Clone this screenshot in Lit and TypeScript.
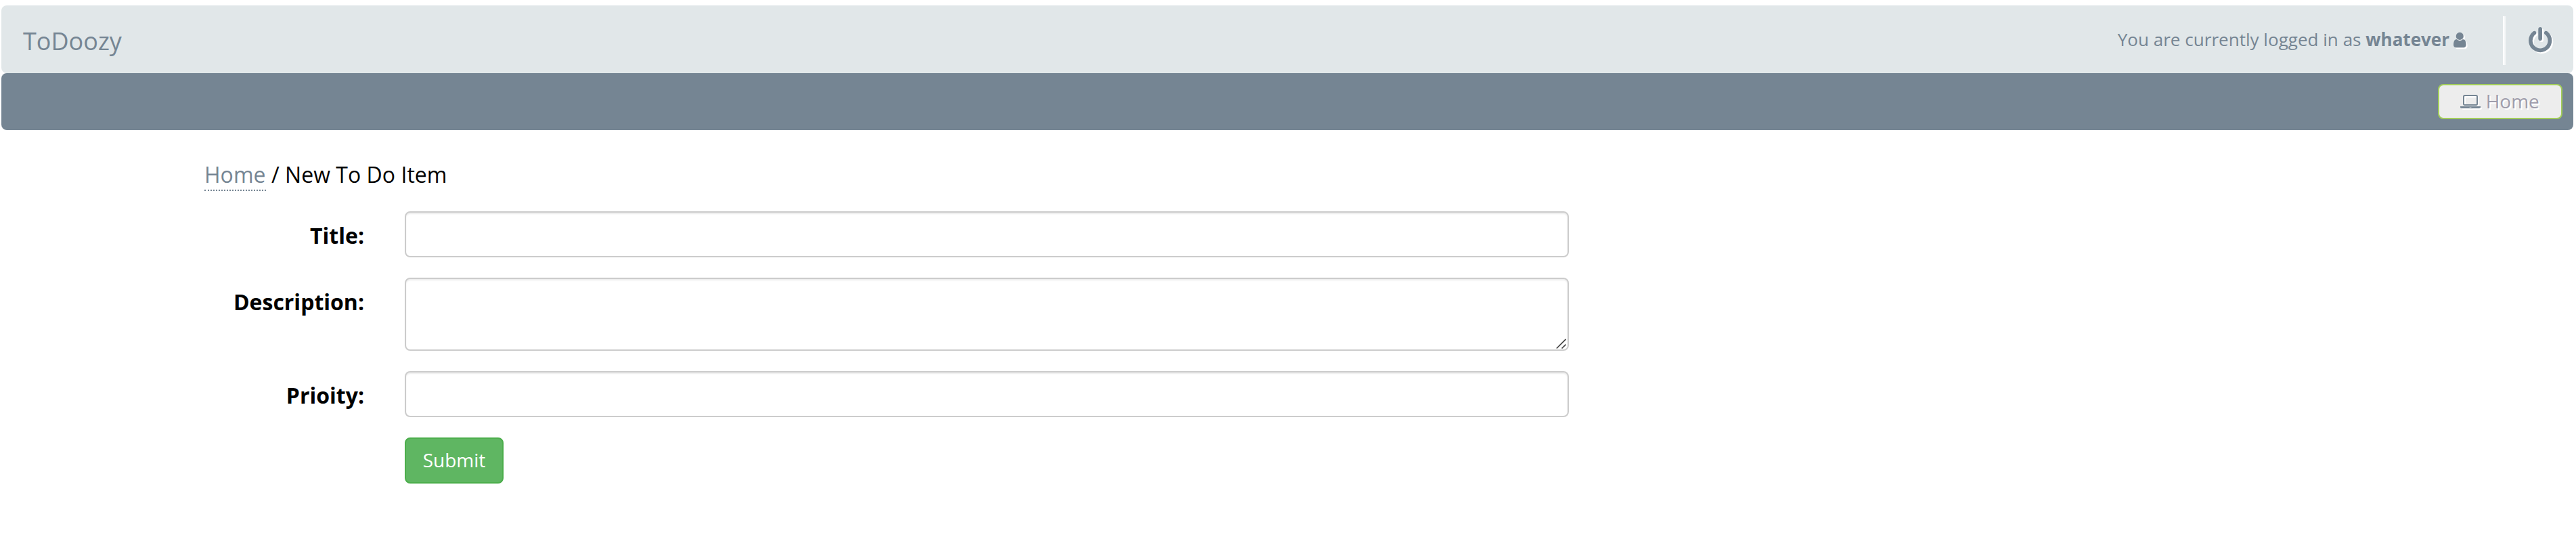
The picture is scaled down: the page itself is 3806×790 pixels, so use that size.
import { LitElement, html, css } from "lit";
import { customElement } from "lit/decorators.js";

@customElement("app-root")
export class AppRoot extends LitElement {
  static styles = css`
    :host {
      display: block;
      box-sizing: border-box;
      min-height: 790px;
      padding: 8px 4px 0 2px;
      background: #fff;
      color: #000;
      font-family: "Open Sans", sans-serif;
      font-size: 32px;
      line-height: 44px;
    }
    * { box-sizing: border-box; }
    svg { display: block; fill: #758593; overflow: visible; }
    .top {
      display: flex;
      align-items: center;
      height: 100px;
      padding: 0 32px 0 32px;
      border-radius: 8px;
      background: #e1e7e9;
      color: #758593;
    }
    .brand { flex: 1; font-size: 36px; padding-top: 5px; }
    .user { display: flex; align-items: center; font-size: 26px; white-space: pre; }
    .user-text { letter-spacing: 0.03px; }
    .shadow { filter: drop-shadow(2px 2px 0 #fff); }
    .user-icon { width: 18.57px; height: 26px; margin: 2px 0 0 6.1px; }
    .divider { width: 4px; height: 72px; margin: 4px 33.7px 0 54.4px; background: #fff; border-right: 2px solid #f5f7f8; }
    .power-icon { width: 34.3px; height: 40px; margin-top: 4px; }
    .nav {
      display: flex;
      justify-content: flex-end;
      align-items: center;
      height: 84px;
      padding-right: 16px;
      border-radius: 8px;
      background: #758593;
    }
    .home-button {
      display: flex;
      align-items: center;
      width: 184px;
      height: 52px;
      padding-left: 31px;
      border: 2px solid #a2cd5a;
      border-radius: 8px;
      background: #ededed;
      color: #9f9dab;
      font-size: 28px;
      text-decoration: none;
      text-shadow: 2px 2px 0 #fff;
    }
    .home-text { padding-bottom: 2px; }
    .laptop-icon { width: 30px; height: 28px; margin-right: 7.7px; }
    .content { padding: 44px 0 0 300px; width: 2316px; }
    .crumbs { height: 76px; white-space: pre; letter-spacing: 0.03px; }
    .crumbs a { color: #758593; text-decoration: none; padding-bottom: 1px; border-bottom: 2px dotted #758593; }
    .form { display: grid; grid-template-columns: 236px 1720px; column-gap: 60px; row-gap: 30px; }
    .label { font-weight: 700; text-align: right; padding-top: 14px; }
    .field {
      display: block;
      width: 100%;
      height: 68px;
      margin: 0;
      padding: 12px 24px;
      border: 2px solid #ccc;
      border-radius: 8px;
      background: #fff;
      box-shadow: inset 0 2px 2px rgba(0, 0, 0, 0.075);
      font: inherit;
      font-size: 28px;
      outline: none;
    }
    .area { position: relative; }
    .area .field { height: 108px; resize: none; }
    .grip { position: absolute; right: 3px; bottom: 2px; width: 16px; height: 16px; stroke: #444; stroke-width: 1.7; }
    .submit {
      grid-column: 2;
      justify-self: start;
      width: 146px;
      height: 68px;
      padding: 0 0 2px;
      border: 2px solid #4cae4c;
      border-radius: 8px;
      background: #5fb662;
      color: #fff;
      font: inherit;
      font-size: 28px;
    }
  `;

  render() {
    return html`
      <header class="top">
        <div class="brand">ToDoozy</div>
        <div class="user"><span class="user-text">You are currently logged in as </span><b>whatever</b><svg class="user-icon shadow" viewBox="0 0 1280 1792"><path d="M1280 1399q0 109-62.5 187t-150.5 78h-854q-88 0-150.5-78t-62.5-187q0-85 8.5-160.5t31.5-152 58.5-131 94-89 134.5-34.5q131 128 313 128t313-128q76 0 134.5 34.5t94 89 58.5 131 31.5 152 8.5 160.5zm-256-887q0 159-112.5 271.5t-271.5 112.5-271.5-112.5-112.5-271.5 112.5-271.5 271.5-112.5 271.5 112.5 112.5 271.5z"/></svg></div>
        <div class="divider"></div>
        <svg class="power-icon shadow" viewBox="0 0 1536 1792"><path d="M1536 896q0 156-61 298t-164 245-245 164-298 61-298-61-245-164-164-245-61-298q0-182 80.5-343t226.5-270q43-32 95.5-25t83.5 50q32 42 24.5 94.5t-49.5 84.5q-98 74-151.5 181t-53.5 228q0 104 40.5 198.5t109.5 163.5 163.5 109.5 198.5 40.5 198.5-40.5 163.5-109.5 109.5-163.5 40.5-198.5q0-121-53.5-228t-151.5-181q-42-32-49.5-84.5t24.5-94.5q31-43 84-50t95 25q146 109 226.5 270t80.5 343zm-640-768v640q0 52-38 90t-90 38-90-38-38-90v-640q0-52 38-90t90-38 90 38 38 90z"/></svg>
      </header>
      <nav class="nav">
        <a class="home-button">
          <svg class="laptop-icon shadow" viewBox="0 0 1920 1792"><path d="M416 1280q-66 0-113-47t-47-113v-704q0-66 47-113t113-47h1088q66 0 113 47t47 113v704q0 66-47 113t-113 47h-1088zm-32-864v704q0 13 9.5 22.5t22.5 9.5h1088q13 0 22.5-9.5t9.5-22.5v-704q0-13-9.5-22.5t-22.5-9.5h-1088q-13 0-22.5 9.5t-9.5 22.5zm1376 928h160v96q0 40-47 68t-113 28h-1600q-66 0-113-28t-47-68v-96h1760zm-720 96q16 0 16-16t-16-16h-160q-16 0-16 16t16 16h160z"/></svg>
          <span class="home-text">Home</span>
        </a>
      </nav>
      <main class="content">
        <div class="crumbs"><a>Home</a> / New To Do Item</div>
        <form class="form" @submit=${(e: Event) => e.preventDefault()}>
          <label class="label" for="title">Title:</label>
          <input class="field" id="title" />
          <label class="label" for="description">Description:</label>
          <div class="area">
            <textarea class="field" id="description"></textarea>
            <svg class="grip" viewBox="0 0 16 16"><path d="M0.8 14.5 14.5 0.8M8.5 14.5 14.5 8.7"/></svg>
          </div>
          <label class="label" for="priority">Prioity:</label>
          <input class="field" id="priority" />
          <button class="submit">Submit</button>
        </form>
      </main>
    `;
  }
}
